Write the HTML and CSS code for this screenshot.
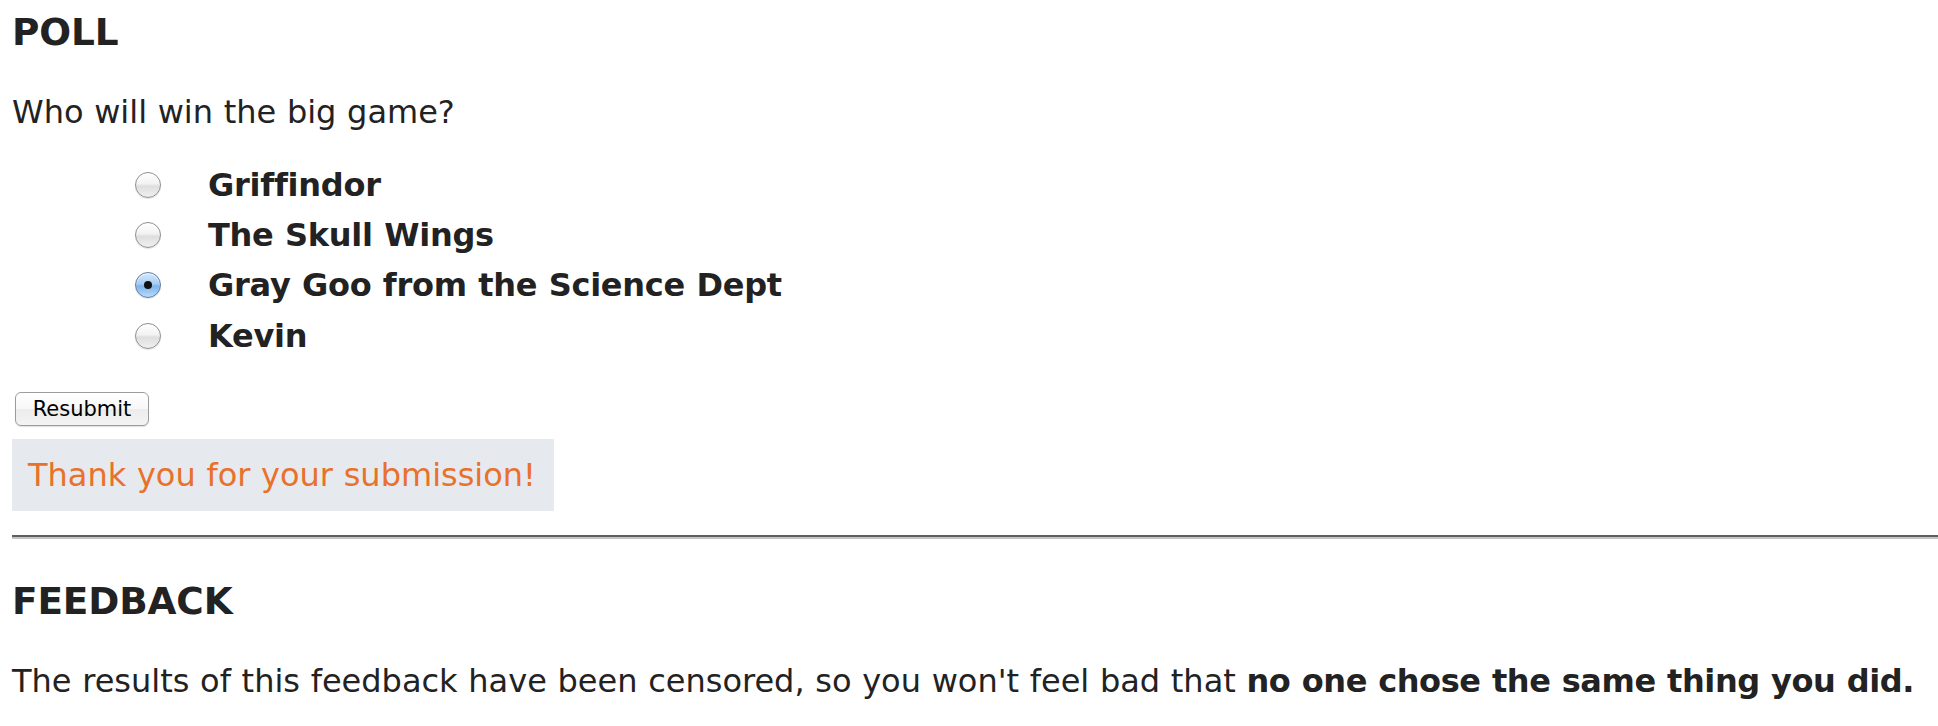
FILE: index.html
```html
<!DOCTYPE html>
<html lang="en">
<head>
<meta charset="utf-8">
<title>Poll</title>
<link rel="stylesheet" href="styles.css">
</head>
<body>
<section class="poll">
  <h2 class="section-title">POLL</h2>
  <p class="question">Who will win the big game?</p>
  <form class="poll-form">
    <ul class="options">
      <li class="option"><input type="radio" name="team" id="o1" class="radio"><label for="o1" class="option-label">Griffindor</label></li>
      <li class="option"><input type="radio" name="team" id="o2" class="radio"><label for="o2" class="option-label">The Skull Wings</label></li>
      <li class="option"><input type="radio" name="team" id="o3" class="radio" checked><label for="o3" class="option-label">Gray Goo from the Science Dept</label></li>
      <li class="option"><input type="radio" name="team" id="o4" class="radio"><label for="o4" class="option-label">Kevin</label></li>
    </ul>
    <button type="button" class="btn">Resubmit</button>
  </form>
  <div class="notice">Thank you for your submission!</div>
</section>
<hr class="divider">
<section class="feedback">
  <h2 class="section-title">FEEDBACK</h2>
  <p class="question">The results of this feedback have been censored, so you won't feel bad that <strong class="emph">no one chose the same thing you did.</strong></p>
</section>
</body>
</html>
```
FILE: styles.css
```css
html, body {
  margin: 0;
  background: #ffffff;
}
body {
  padding: 10px 0 0 12px;
  font-family: "DejaVu Sans", Verdana, sans-serif;
  font-size: 32px;
  color: #222222;
  word-spacing: 0.5px;
}
.section-title {
  margin: 0 0 38px 0;
  font-size: 37.44px;
  line-height: 44px;
  font-weight: bold;
  letter-spacing: -0.15px;
}
.question {
  margin: 0;
  line-height: 40px;
  white-space: nowrap;
}
.emph {
  font-weight: bold;
  letter-spacing: -0.4px;
}
.poll-form {
  margin: 0;
}
.options {
  list-style: none;
  margin: 0;
  padding: 27.6px 0 0 123px;
}
.option {
  display: flex;
  align-items: center;
  height: 50.33px;
  line-height: 50.33px;
}
.option-label {
  margin-left: 47px;
  font-weight: bold;
  letter-spacing: -0.25px;
}
.radio {
  -webkit-appearance: none;
  appearance: none;
  margin: 0;
  width: 26px;
  height: 26px;
  border-radius: 50%;
  box-sizing: border-box;
  border: 1px solid #8f8f8f;
  background: linear-gradient(#ffffff 0%, #f2f2f2 45%, #dedede 55%, #f0f0f0 100%);
  box-shadow: inset 0 1px 1px rgba(255,255,255,0.9), 0 1px 1px rgba(0,0,0,0.1);
  position: relative;
}
.radio:checked {
  border-color: #5a7ca4;
  background: linear-gradient(#d5e8fb 0%, #a9cdf4 45%, #7fb4ec 55%, #b9dbfb 100%);
}
.radio:checked::after {
  content: "";
  position: absolute;
  left: 50%;
  top: 50%;
  width: 8px;
  height: 8px;
  margin: -4px 0 0 -4px;
  border-radius: 50%;
  background: #111;
}
.btn {
  display: block;
  margin: 31px 0 0 3px;
  width: 134px;
  height: 34px;
  padding: 0;
  border: 1px solid #9c9c9c;
  border-radius: 6px;
  background: linear-gradient(#ffffff 0%, #f7f7f7 50%, #ececec 51%, #f4f4f4 100%);
  box-shadow: 0 1px 1px rgba(0,0,0,0.12);
  font-family: "DejaVu Sans", "Lucida Grande", sans-serif;
  font-size: 21px;
  word-spacing: 0;
  color: #000;
}
.notice {
  display: inline-block;
  margin-top: 13px;
  padding: 16px 18px 16px 16px;
  background: #e6eaee;
  color: #e8712b;
  line-height: 40px;
}
.divider {
  margin: 24px 0 40px 0;
  height: 0;
  border: 0;
  border-top: 2px solid #5f5f5f;
  border-bottom: 2px solid #c4c4c4;
}
.feedback .section-title {
  margin-bottom: 37.6px;
}
```
